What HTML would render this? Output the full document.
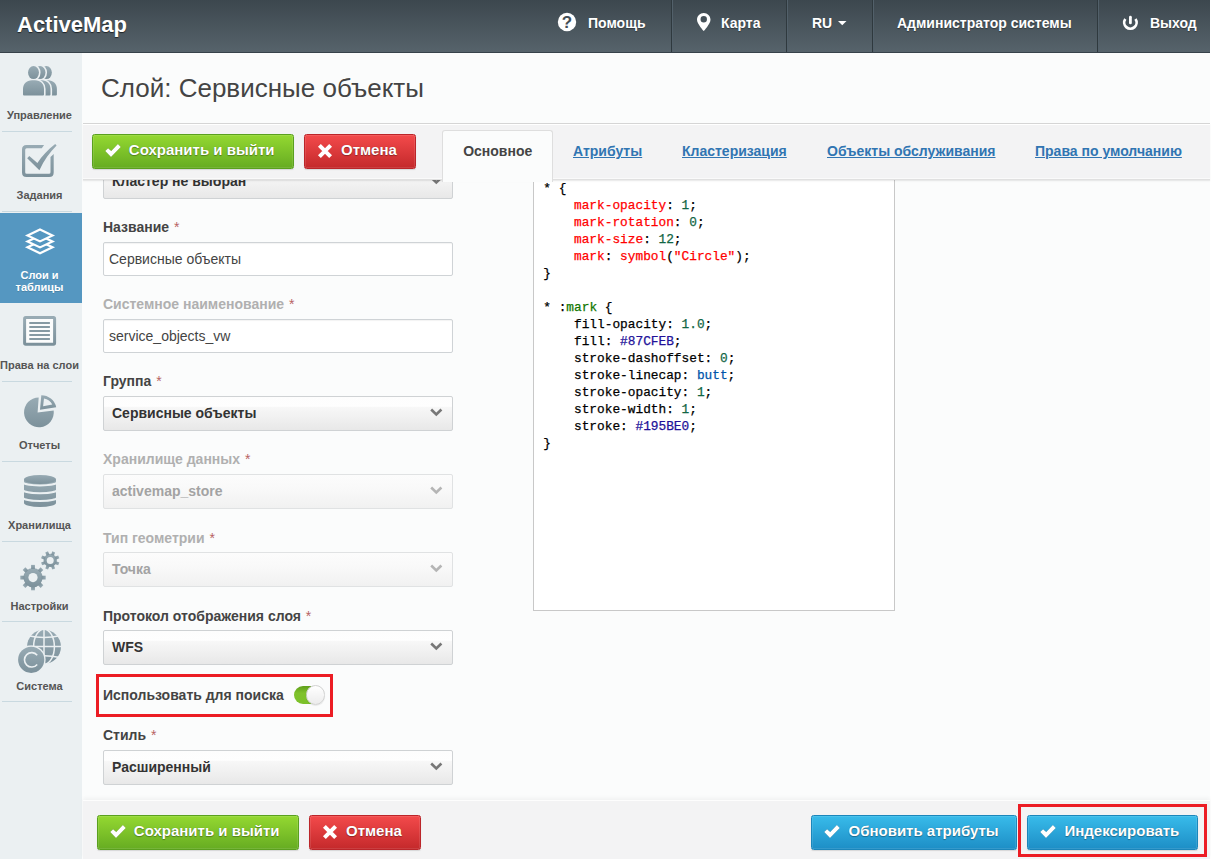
<!DOCTYPE html>
<html><head><meta charset="utf-8">
<style>
*{box-sizing:border-box;margin:0;padding:0}
html,body{width:1211px;height:859px;overflow:hidden;background:#fff;font-family:"Liberation Sans",sans-serif;color:#444}
.hdr{position:absolute;left:0;top:0;width:1210px;height:53px;background:linear-gradient(#3c474e,#56636b);border-bottom:1px solid #37424a}
.logo{position:absolute;left:17px;top:13.6px;font-size:22px;line-height:22px;font-weight:bold;color:#fff;text-shadow:0 1px 1px rgba(0,0,0,.6)}
.hi{position:absolute;top:16px;color:#fff;font-weight:bold;font-size:14px;line-height:14px;text-shadow:0 1px 1px rgba(0,0,0,.35)}
.sep{position:absolute;top:0;width:2px;height:52px;border-left:1px solid #2f393e;border-right:1px solid #52606a}
.side{position:absolute;left:0;top:53px;width:82px;height:806px;background:#ebf0f2}
.sl{position:absolute;left:-1.5px;width:82px;text-align:center;font-size:11px;line-height:11px;font-weight:bold;color:#555}
.sln{position:absolute;left:2px;width:70px;height:1px;background:#c9d9e0}
.title{position:absolute;left:101px;top:75px;font-size:26px;line-height:26px;color:#444}
.bar{position:absolute;left:83px;width:1127px;background:#f3f3f4}
.btn{position:absolute;height:35px;color:#fff;font-weight:bold;font-size:15px;line-height:15px;border-radius:2.5px;text-shadow:0 1px 1px rgba(0,0,0,.3),0 0 1px rgba(0,0,0,.25);box-shadow:inset 0 0 0 1px rgba(255,255,255,.10),0 1px 1px rgba(0,0,0,.12)}
.g{background:linear-gradient(#94d831,#66ac22);border:1px solid #5aa01e}
.r{background:linear-gradient(#f34a4b,#c4292b);border:1px solid #bb2529}
.b{background:linear-gradient(#38bbea,#1d8ec6);border:1px solid #1b86bb}
.lbl{position:absolute;left:103px;font-size:14px;line-height:14px;font-weight:bold;color:#444}
.lbl.dis{color:#b0b0b0}
.lbl i{font-style:normal;color:#b76363;font-weight:normal;margin-left:1px}
.inp{position:absolute;left:103px;width:350px;height:34px;border:1px solid #cfd3d6;border-radius:2px;background:#fff;box-shadow:inset 0 1px 1px rgba(0,0,0,.05);font-size:14px;line-height:14px;color:#444}
.sel{position:absolute;left:103px;width:350px;height:35px;border:1px solid #cfd2d4;border-radius:2px;background:linear-gradient(#fdfdfd 0%,#fefefe 28%,#f7f7f7 32%,#f1f1f1 60%,#e8e8e8 100%);font-size:14px;line-height:14px;font-weight:bold;color:#333}
.sel.dis{color:#a3a3a3;background:linear-gradient(#fcfcfc,#f9f9f9 40%,#f1f1f1);border-color:#e0e2e3}
.tab{position:absolute;top:143.75px;font-size:14px;line-height:14px;font-weight:bold;color:#3075b2;text-decoration:underline}
.code{position:absolute;left:533px;top:160px;width:362px;height:451px;background:#fff;border:1px solid #c8c8c8;font-family:"Liberation Mono",monospace;font-size:12.8px;line-height:17px;color:#000;padding:19px 0 0 9.3px;white-space:pre;-webkit-text-stroke:0.25px currentColor}
.kw{color:#f00}.nm{color:#164}.hx{color:#219}.at{color:#05a}.ps{color:#170}
</style></head><body>
<div style="position:absolute;left:0;top:0;width:1210px;height:859px;background:#fbfcfc"></div>
<div class="hdr">
  <div class="logo">ActiveMap</div>
  <svg width="20" height="20" viewBox="0 0 20 20" style="position:absolute;left:557px;top:12px"><circle cx="10" cy="10" r="9.2" fill="#fff"/><text x="10" y="16.3" text-anchor="middle" font-family="Liberation Sans" font-weight="bold" font-size="17" fill="#434e55">?</text></svg>
  <div class="hi" style="left:588px">Помощь</div>
  <div class="sep" style="left:671px"></div>
  <svg width="14" height="19" viewBox="0 0 14 19" style="position:absolute;left:696.6px;top:12.9px"><path fill-rule="evenodd" fill="#fff" d="M6.75 0 C3 0 0 3 0 6.75 C0 10.8 6.75 18.1 6.75 18.1 C6.75 18.1 13.5 10.8 13.5 6.75 C13.5 3 10.5 0 6.75 0 Z M6.75 3.1 A3.2 3.2 0 1 0 6.75 9.5 A3.2 3.2 0 1 0 6.75 3.1 Z"/></svg>
  <div class="hi" style="left:721px">Карта</div>
  <div class="sep" style="left:786px"></div>
  <div class="hi" style="left:812px">RU</div>
  <svg width="9" height="5" viewBox="0 0 9 5" style="position:absolute;left:837.5px;top:20.6px"><path d="M0 0 H8.5 L4.25 4.3 Z" fill="#fff"/></svg>
  <div class="sep" style="left:872px"></div>
  <div class="hi" style="left:897px">Администратор системы</div>
  <div class="sep" style="left:1097px"></div>
  <svg width="17" height="17" viewBox="0 0 17 17" style="position:absolute;left:1122px;top:15px"><path d="M3.32 3.94 A6.2 6.2 0 1 0 13.48 3.94" fill="none" stroke="#fff" stroke-width="2.7"/><line x1="8.4" y1="2.2" x2="8.4" y2="7.9" stroke="#fff" stroke-width="2.8" stroke-linecap="round"/></svg>
  <div class="hi" style="left:1150px">Выход</div>
</div>

<div class="side">
  <div style="position:absolute;left:0;top:160px;width:82px;height:90px;background:#5597c1"></div>
  <div class="sln" style="top:78px"></div>
  <div class="sln" style="top:158px"></div>
  <div class="sln" style="top:328px"></div>
  <div class="sln" style="top:408px"></div>
  <div class="sln" style="top:488px"></div>
  <div class="sln" style="top:568px"></div>
  <div class="sln" style="top:648px"></div>
  <svg width="82" height="806" viewBox="0 53 82 806" style="position:absolute;left:0;top:0"><defs><linearGradient id="ig" x1="0" y1="0" x2="0" y2="1"><stop offset="0" stop-color="#98abb4"/><stop offset="1" stop-color="#7c919b"/></linearGradient></defs><g fill="url(#ig)"><g transform="translate(35.9,66)" ><ellipse cx="10.5" cy="6.55" rx="5.45" ry="6.55"/><path d="M0 28.5 V23 C0 18 3.5 14.3 9 14.3 H12 C17.5 14.3 21 18 21 23 V28.5 Q21 29.5 20 29.5 H1 Q0 29.5 0 28.5 Z"/></g><g transform="translate(29.5,66)" fill="none" stroke="#ebf0f2" stroke-width="3.2"><ellipse cx="10.5" cy="6.55" rx="5.45" ry="6.55"/><path d="M0 28.5 V23 C0 18 3.5 14.3 9 14.3 H12 C17.5 14.3 21 18 21 23 V28.5 Q21 29.5 20 29.5 H1 Q0 29.5 0 28.5 Z"/></g><g transform="translate(29.5,66)" ><ellipse cx="10.5" cy="6.55" rx="5.45" ry="6.55"/><path d="M0 28.5 V23 C0 18 3.5 14.3 9 14.3 H12 C17.5 14.3 21 18 21 23 V28.5 Q21 29.5 20 29.5 H1 Q0 29.5 0 28.5 Z"/></g><g transform="translate(23,66)" fill="none" stroke="#ebf0f2" stroke-width="3.2"><ellipse cx="10.5" cy="6.55" rx="5.45" ry="6.55"/><path d="M0 28.5 V23 C0 18 3.5 14.3 9 14.3 H12 C17.5 14.3 21 18 21 23 V28.5 Q21 29.5 20 29.5 H1 Q0 29.5 0 28.5 Z"/></g><g transform="translate(23,66)" ><ellipse cx="10.5" cy="6.55" rx="5.45" ry="6.55"/><path d="M0 28.5 V23 C0 18 3.5 14.3 9 14.3 H12 C17.5 14.3 21 18 21 23 V28.5 Q21 29.5 20 29.5 H1 Q0 29.5 0 28.5 Z"/></g></g><path fill="url(#ig)" d="M44.1 145 H26.5 Q22 145 22 149.5 V172.5 Q22 177 26.5 177 H49.2 Q53.7 177 53.7 172.5 V153.9 L50.5 156.9 V172.3 Q50.5 173.8 49 173.8 H26.7 Q25.2 173.8 25.2 172.3 V149.7 Q25.2 148.2 26.7 148.2 H41.8 Z"/><path d="M27.2 158.3 L29.3 156 L37.4 162.9 C42 156 48 149.5 55.2 144 L56.6 145.5 C50 152 44 160 39.4 170.2 Z" fill="url(#ig)"/><g fill="#5597c1" stroke="#fff" stroke-width="2.2" stroke-linejoin="miter" stroke-miterlimit="10"><path d="M40 241.2 L52.5 247.2 L40 253.2 L27.5 247.2 Z"/><path d="M40 235.4 L52.5 241.4 L40 247.4 L27.5 241.4 Z"/><path d="M40 229.4 L52.5 235.4 L40 241.4 L27.5 235.4 Z"/></g><rect x="24.6" y="317.6" width="30" height="26.6" rx="1.2" fill="#fbfcfc" stroke="url(#ig)" stroke-width="3"/><g fill="#869aa3"><rect x="29.3" y="322" width="20.6" height="2"/><rect x="29.3" y="326" width="20.6" height="2"/><rect x="29.3" y="330" width="20.6" height="2"/><rect x="29.3" y="334" width="20.6" height="2"/><rect x="29.3" y="338" width="20.6" height="2"/></g><path d="M37.6 412.6 L38.7 397.4 A14.9 14.9 0 1 0 53.7 410.4 Z" fill="url(#ig)"/><path fill-rule="evenodd" fill="url(#ig)" d="M40 409.8 L41.3 395.2 A15.2 15.2 0 0 1 56.2 407.2 Z M43.1 406.3 L44 398.6 A11.6 11.6 0 0 1 52.3 404.6 Z"/><g fill="url(#ig)"><path d="M24 479.4 V503 A16 4 0 0 0 56 503 V479.4 Z"/><ellipse cx="40" cy="479.4" rx="16" ry="4.5"/></g><g fill="none" stroke="#ebf0f2" stroke-width="2"><path d="M23 482.0 A17 3.4 0 0 0 57 482.0"/><path d="M23 489.8 A17 3.4 0 0 0 57 489.8"/><path d="M23 497.6 A17 3.4 0 0 0 57 497.6"/></g><g fill="url(#ig)"><circle cx="33" cy="577.6" r="9.6"/><rect x="31.10" y="564.90" width="3.8" height="4.10" transform="rotate(0.0 33 577.6)"/><rect x="31.10" y="564.90" width="3.8" height="4.10" transform="rotate(45.0 33 577.6)"/><rect x="31.10" y="564.90" width="3.8" height="4.10" transform="rotate(90.0 33 577.6)"/><rect x="31.10" y="564.90" width="3.8" height="4.10" transform="rotate(135.0 33 577.6)"/><rect x="31.10" y="564.90" width="3.8" height="4.10" transform="rotate(180.0 33 577.6)"/><rect x="31.10" y="564.90" width="3.8" height="4.10" transform="rotate(225.0 33 577.6)"/><rect x="31.10" y="564.90" width="3.8" height="4.10" transform="rotate(270.0 33 577.6)"/><rect x="31.10" y="564.90" width="3.8" height="4.10" transform="rotate(315.0 33 577.6)"/><circle cx="50.2" cy="560.4" r="6.6"/><rect x="48.70" y="551.10" width="3.0" height="3.70" transform="rotate(22.5 50.2 560.4)"/><rect x="48.70" y="551.10" width="3.0" height="3.70" transform="rotate(67.5 50.2 560.4)"/><rect x="48.70" y="551.10" width="3.0" height="3.70" transform="rotate(112.5 50.2 560.4)"/><rect x="48.70" y="551.10" width="3.0" height="3.70" transform="rotate(157.5 50.2 560.4)"/><rect x="48.70" y="551.10" width="3.0" height="3.70" transform="rotate(202.5 50.2 560.4)"/><rect x="48.70" y="551.10" width="3.0" height="3.70" transform="rotate(247.5 50.2 560.4)"/><rect x="48.70" y="551.10" width="3.0" height="3.70" transform="rotate(292.5 50.2 560.4)"/><rect x="48.70" y="551.10" width="3.0" height="3.70" transform="rotate(337.5 50.2 560.4)"/></g><circle cx="33" cy="577.6" r="4.6" fill="#ebf0f2"/><circle cx="50.2" cy="560.4" r="3.5" fill="#ebf0f2"/><circle cx="44" cy="646.7" r="17" fill="url(#ig)"/><g fill="none" stroke="#ebf0f2" stroke-width="1.5"><line x1="44" y1="628" x2="44" y2="665"/><ellipse cx="44" cy="646.7" rx="10.4" ry="17.5"/><line x1="26" y1="646.6" x2="62" y2="646.6"/><path d="M28 635.8 Q44 639.4 60 635.8"/><path d="M28 657.6 Q44 654 60 657.6"/></g><circle cx="31.2" cy="659.8" r="14.4" fill="#ebf0f2"/><circle cx="31.2" cy="659.8" r="13.1" fill="url(#ig)"/><path d="M37.2 655.2 A7.2 7.2 0 1 0 37.2 664.4" fill="none" stroke="#ebf0f2" stroke-width="1.6"/></svg>
</div>
<div class="sl" style="top:110.4px">Управление</div>
<div class="sl" style="top:190.1px">Задания</div>
<div class="sl" style="top:269.8px;color:#fff;text-shadow:0 1px 0 rgba(0,0,0,.15)">Слои и</div>
<div class="sl" style="top:282px;color:#fff;text-shadow:0 1px 0 rgba(0,0,0,.15)">таблицы</div>
<div class="sl" style="top:360.4px">Права на слои</div>
<div class="sl" style="top:440.4px">Отчеты</div>
<div class="sl" style="top:519.9px">Хранилища</div>
<div class="sl" style="top:600.7px">Настройки</div>
<div class="sl" style="top:680.7px">Система</div>

<div class="title">Слой: Сервисные объекты</div>

<div class="sel" style="top:164px"><span style="position:absolute;left:8px;top:9.4px">Кластер не выбран</span><svg width="13" height="9" viewBox="0 0 13 9" style="position:absolute;right:9.5px;top:11.3px"><path d="M1.2 1.5 L6.3 6.5 L11.4 1.5" fill="none" stroke="#777" stroke-width="2.6"/></svg></div>
<div class="lbl" style="top:219.95px">Название <i>*</i></div>
<div class="inp" style="top:242px"><span style="position:absolute;left:5px;top:8.6px">Сервисные объекты</span></div>
<div class="lbl dis" style="top:296.75px">Системное наименование <i>*</i></div>
<div class="inp" style="top:319px"><span style="position:absolute;left:5px;top:8.6px">service_objects_vw</span></div>
<div class="lbl" style="top:374.15px">Группа <i>*</i></div>
<div class="sel" style="top:396px"><span style="position:absolute;left:8px;top:9.4px">Сервисные объекты</span><svg width="13" height="9" viewBox="0 0 13 9" style="position:absolute;right:9.5px;top:11.3px"><path d="M1.2 1.5 L6.3 6.5 L11.4 1.5" fill="none" stroke="#777" stroke-width="2.6"/></svg></div>
<div class="lbl dis" style="top:452.35px">Хранилище данных <i>*</i></div>
<div class="sel dis" style="top:474px"><span style="position:absolute;left:8px;top:9.4px">activemap_store</span><svg width="13" height="9" viewBox="0 0 13 9" style="position:absolute;right:9.5px;top:11.3px"><path d="M1.2 1.5 L6.3 6.5 L11.4 1.5" fill="none" stroke="#b5b5b5" stroke-width="2.6"/></svg></div>
<div class="lbl dis" style="top:530.75px">Тип геометрии <i>*</i></div>
<div class="sel dis" style="top:552px"><span style="position:absolute;left:8px;top:9.4px">Точка</span><svg width="13" height="9" viewBox="0 0 13 9" style="position:absolute;right:9.5px;top:11.3px"><path d="M1.2 1.5 L6.3 6.5 L11.4 1.5" fill="none" stroke="#b5b5b5" stroke-width="2.6"/></svg></div>
<div class="lbl" style="top:608.55px">Протокол отображения слоя <i>*</i></div>
<div class="sel" style="top:630px"><span style="position:absolute;left:8px;top:9.4px">WFS</span><svg width="13" height="9" viewBox="0 0 13 9" style="position:absolute;right:9.5px;top:11.3px"><path d="M1.2 1.5 L6.3 6.5 L11.4 1.5" fill="none" stroke="#777" stroke-width="2.6"/></svg></div>
<div class="lbl" style="top:687.55px">Использовать для поиска</div>
<div style="position:absolute;left:294px;top:686px;width:30px;height:18px;border-radius:9px;background:linear-gradient(#5f9f1b,#7fc22b 40%,#7cc12a)"></div>
<div style="position:absolute;left:305.5px;top:685.2px;width:19.5px;height:19.5px;border-radius:50%;background:linear-gradient(#fff,#ececec);border:1px solid #d2d2d2;box-shadow:0 1px 1px rgba(0,0,0,.08)"></div>
<div class="lbl" style="top:727.85px">Стиль <i>*</i></div>
<div class="sel" style="top:750px"><span style="position:absolute;left:8px;top:9.4px">Расширенный</span><svg width="13" height="9" viewBox="0 0 13 9" style="position:absolute;right:9.5px;top:11.3px"><path d="M1.2 1.5 L6.3 6.5 L11.4 1.5" fill="none" stroke="#777" stroke-width="2.6"/></svg></div>

<div class="code">* {
    <span class="kw">mark-opacity</span>: <span class="nm">1</span>;
    <span class="kw">mark-rotation</span>: <span class="nm">0</span>;
    <span class="kw">mark-size</span>: <span class="nm">12</span>;
    <span class="kw">mark</span>: <span class="kw">symbol</span>(<span class="kw">"Circle"</span>);
}

* :<span class="ps">mark</span> {
    fill-opacity: <span class="nm">1.0</span>;
    fill: <span class="hx">#87CFEB</span>;
    stroke-dashoffset: <span class="nm">0</span>;
    stroke-linecap: <span class="at">butt</span>;
    stroke-opacity: <span class="nm">1</span>;
    stroke-width: <span class="nm">1</span>;
    stroke: <span class="hx">#195BE0</span>;
}</div>

<div class="bar" style="top:123px;height:57px;border-top:1px solid #d5d5d5;border-bottom:1px solid #e0e0e0;box-shadow:inset 0 1px 0 #fff,inset 0 -1px 0 #fafafa,0 1px 1px rgba(0,0,0,.06),0 2px 2px rgba(0,0,0,.02)"></div>
<div class="btn g" style="left:92px;top:134px;width:202px"><svg width="16" height="13" viewBox="0 0 16 13" style="position:absolute;left:12px;top:9px;overflow:visible"><path d="M0.2 7 L3.1 4.2 L6.2 6.9 L12.9 0.1 L15.8 3.1 L6 12.9 Z" fill="#fff" stroke="rgba(0,0,0,.12)" stroke-width="0.8"/></svg><span style="position:absolute;left:35.8px;top:7.0px">Сохранить и выйти</span></div>
<div class="btn r" style="left:304px;top:134px;width:112px"><svg width="14" height="14" viewBox="0 0 14 14" style="position:absolute;left:12.9px;top:8.9px;overflow:visible"><path d="M1.4 1.4 L12.6 12.6 M12.6 1.4 L1.4 12.6" stroke="#fff" stroke-width="4"/></svg><span style="position:absolute;left:36px;top:7.0px">Отмена</span></div>
<div style="position:absolute;left:442px;top:130px;width:111px;height:52px;background:#fbfcfc;border:1px solid #dedede;border-bottom:none;border-radius:3px 3px 0 0"></div>
<div style="position:absolute;left:463.2px;top:143.75px;font-size:14px;line-height:14px;font-weight:bold;color:#444">Основное</div>
<div class="tab" style="left:573px">Атрибуты</div>
<div class="tab" style="left:682px">Кластеризация</div>
<div class="tab" style="left:827px">Объекты обслуживания</div>
<div class="tab" style="left:1035px">Права по умолчанию</div>

<div class="bar" style="top:800px;height:59px;border-top:1px solid #fdfdfd;box-shadow:0 -2px 4px rgba(0,0,0,.045)"></div>
<div class="btn g" style="left:97px;top:815px;width:202px"><svg width="16" height="13" viewBox="0 0 16 13" style="position:absolute;left:12px;top:9px;overflow:visible"><path d="M0.2 7 L3.1 4.2 L6.2 6.9 L12.9 0.1 L15.8 3.1 L6 12.9 Z" fill="#fff" stroke="rgba(0,0,0,.12)" stroke-width="0.8"/></svg><span style="position:absolute;left:35.8px;top:7.0px">Сохранить и выйти</span></div>
<div class="btn r" style="left:309px;top:815px;width:112px"><svg width="14" height="14" viewBox="0 0 14 14" style="position:absolute;left:12.9px;top:8.9px;overflow:visible"><path d="M1.4 1.4 L12.6 12.6 M12.6 1.4 L1.4 12.6" stroke="#fff" stroke-width="4"/></svg><span style="position:absolute;left:36px;top:7.0px">Отмена</span></div>
<div class="btn b" style="left:811px;top:815px;width:206px"><svg width="16" height="13" viewBox="0 0 16 13" style="position:absolute;left:12px;top:9px;overflow:visible"><path d="M0.2 7 L3.1 4.2 L6.2 6.9 L12.9 0.1 L15.8 3.1 L6 12.9 Z" fill="#fff" stroke="rgba(0,0,0,.12)" stroke-width="0.8"/></svg><span style="position:absolute;left:36.5px;top:7.0px">Обновить атрибуты</span></div>
<div class="btn b" style="left:1027px;top:815px;width:171px"><svg width="16" height="13" viewBox="0 0 16 13" style="position:absolute;left:12px;top:9px;overflow:visible"><path d="M0.2 7 L3.1 4.2 L6.2 6.9 L12.9 0.1 L15.8 3.1 L6 12.9 Z" fill="#fff" stroke="rgba(0,0,0,.12)" stroke-width="0.8"/></svg><span style="position:absolute;left:36.5px;top:7.0px">Индексировать</span></div>

<div style="position:absolute;left:96px;top:674px;width:237px;height:43px;border:3px solid #ec1c24"></div>
<div style="position:absolute;left:1018px;top:804px;width:189px;height:53px;border:3px solid #ec1c24"></div>
</body></html>
